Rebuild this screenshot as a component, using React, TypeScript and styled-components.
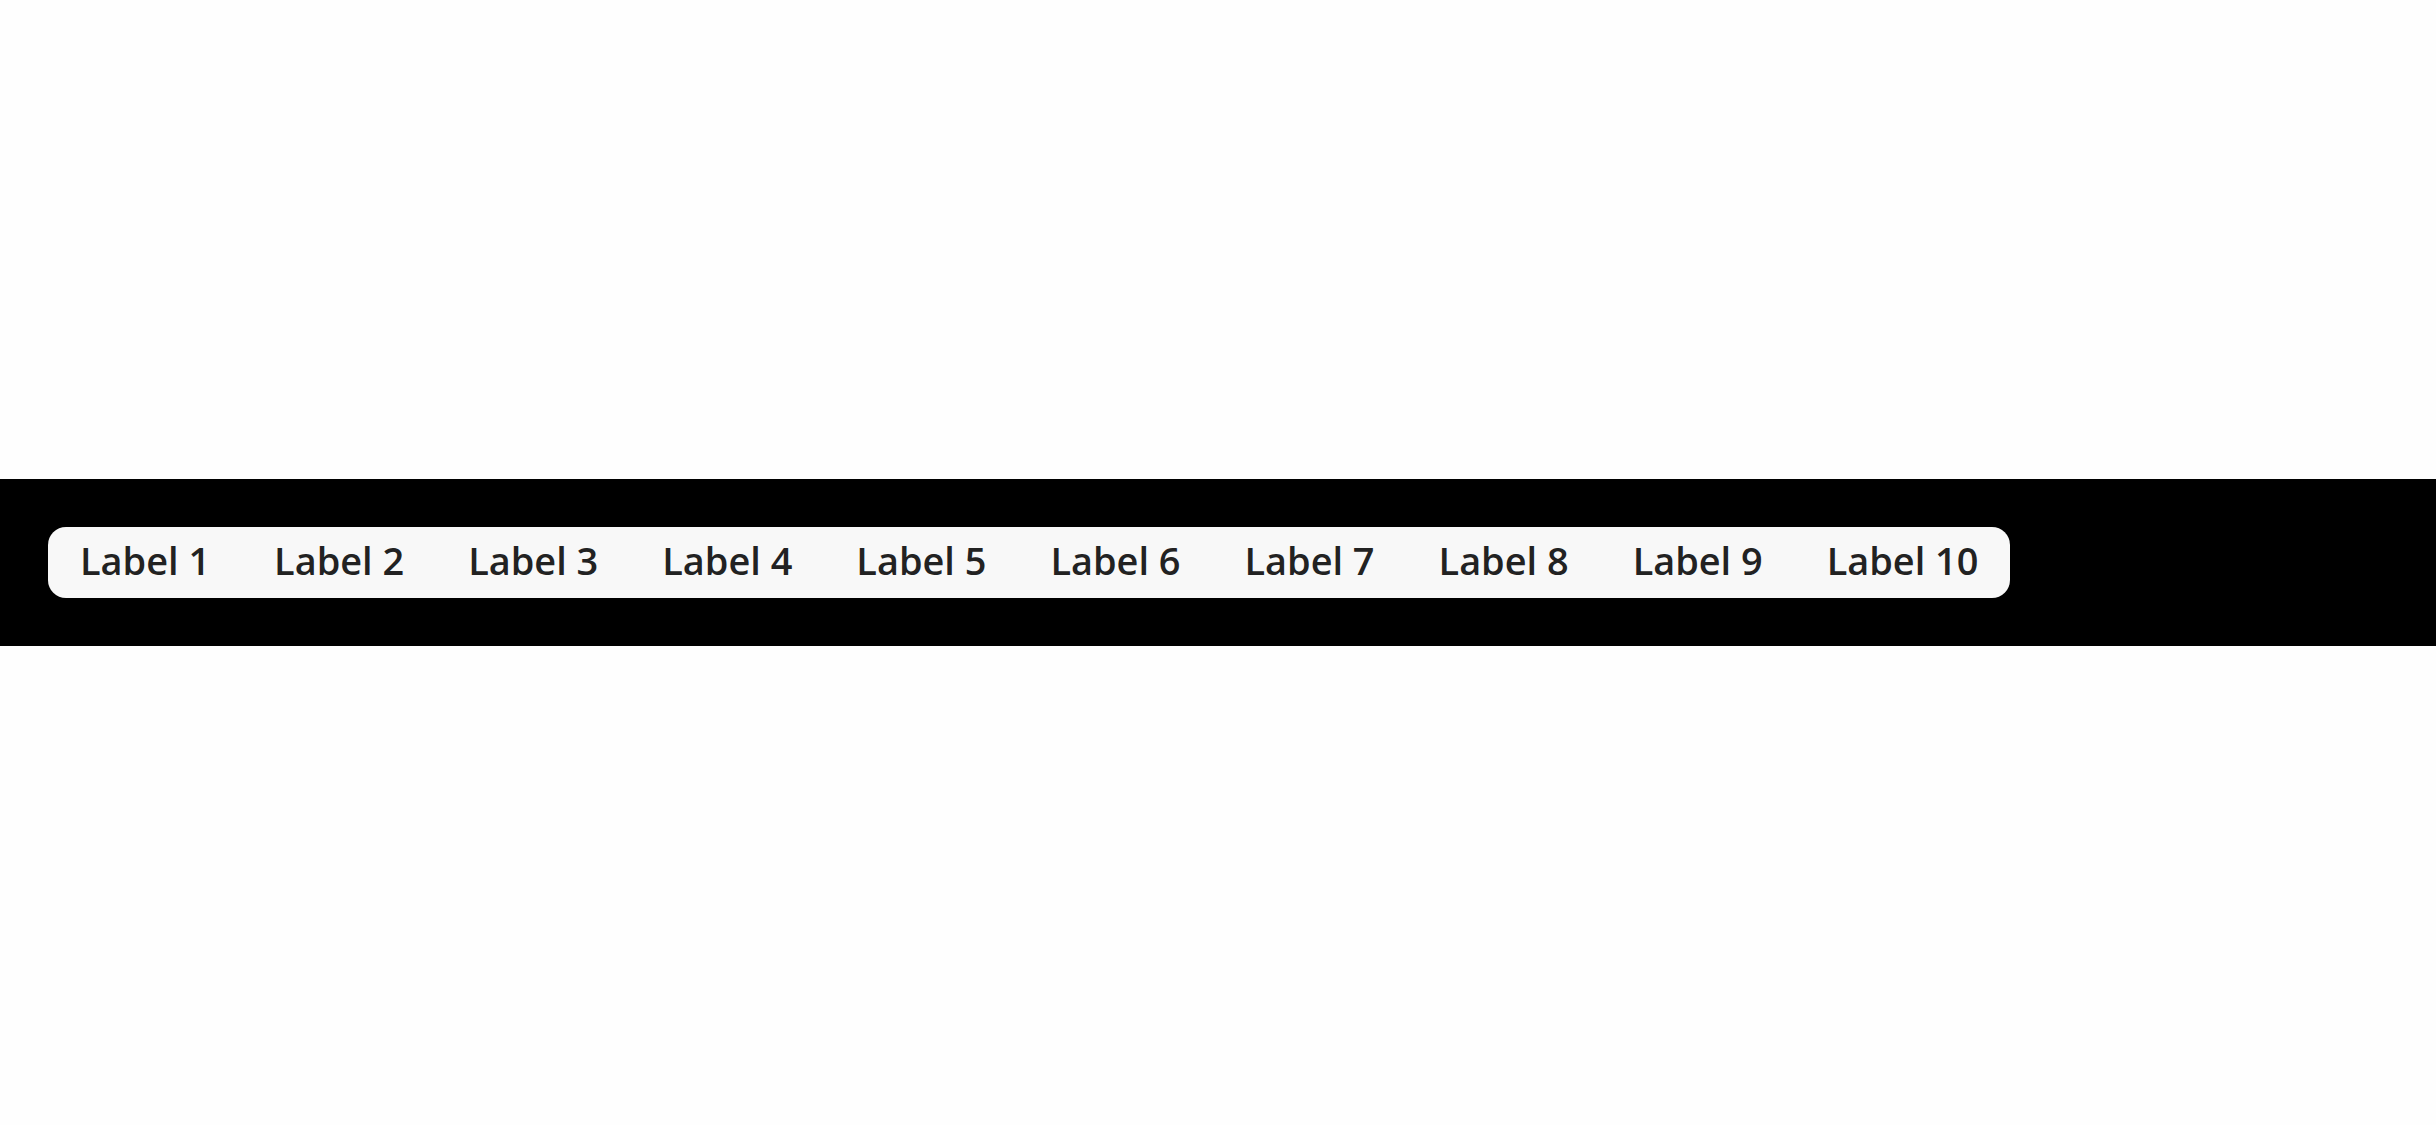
import React from "react";
import styled, { createGlobalStyle } from "styled-components";

const Global = createGlobalStyle`
  html, body { margin: 0; padding: 0; background: #fefefe; }
  #root { min-height: 100vh; }
`;

const Page = styled.div`
  height: 1125px;
  display: flex;
  flex-direction: column;
  justify-content: center;
`;

const Bar = styled.div`
  background: #000;
  padding: 48px 48px;
  display: flex;
`;

const Tabs = styled.div`
  display: flex;
  align-items: center;
  height: 71px;
  background: #f8f8f8;
  border-radius: 18px;
`;

const Tab = styled.div`
  padding: 0 32px 3px;
  font-family: "Open Sans", sans-serif;
  font-weight: 600;
  font-size: 37.9px;
  color: #222;
  white-space: nowrap;
  line-height: 1;
`;

const labels = Array.from({ length: 10 }, (_, i) => `Label ${i + 1}`);

export default function App() {
  return (
    <>
      <Global />
      <Page>
        <Bar>
          <Tabs>
            {labels.map((l) => (
              <Tab key={l}>{l}</Tab>
            ))}
          </Tabs>
        </Bar>
      </Page>
    </>
  );
}
